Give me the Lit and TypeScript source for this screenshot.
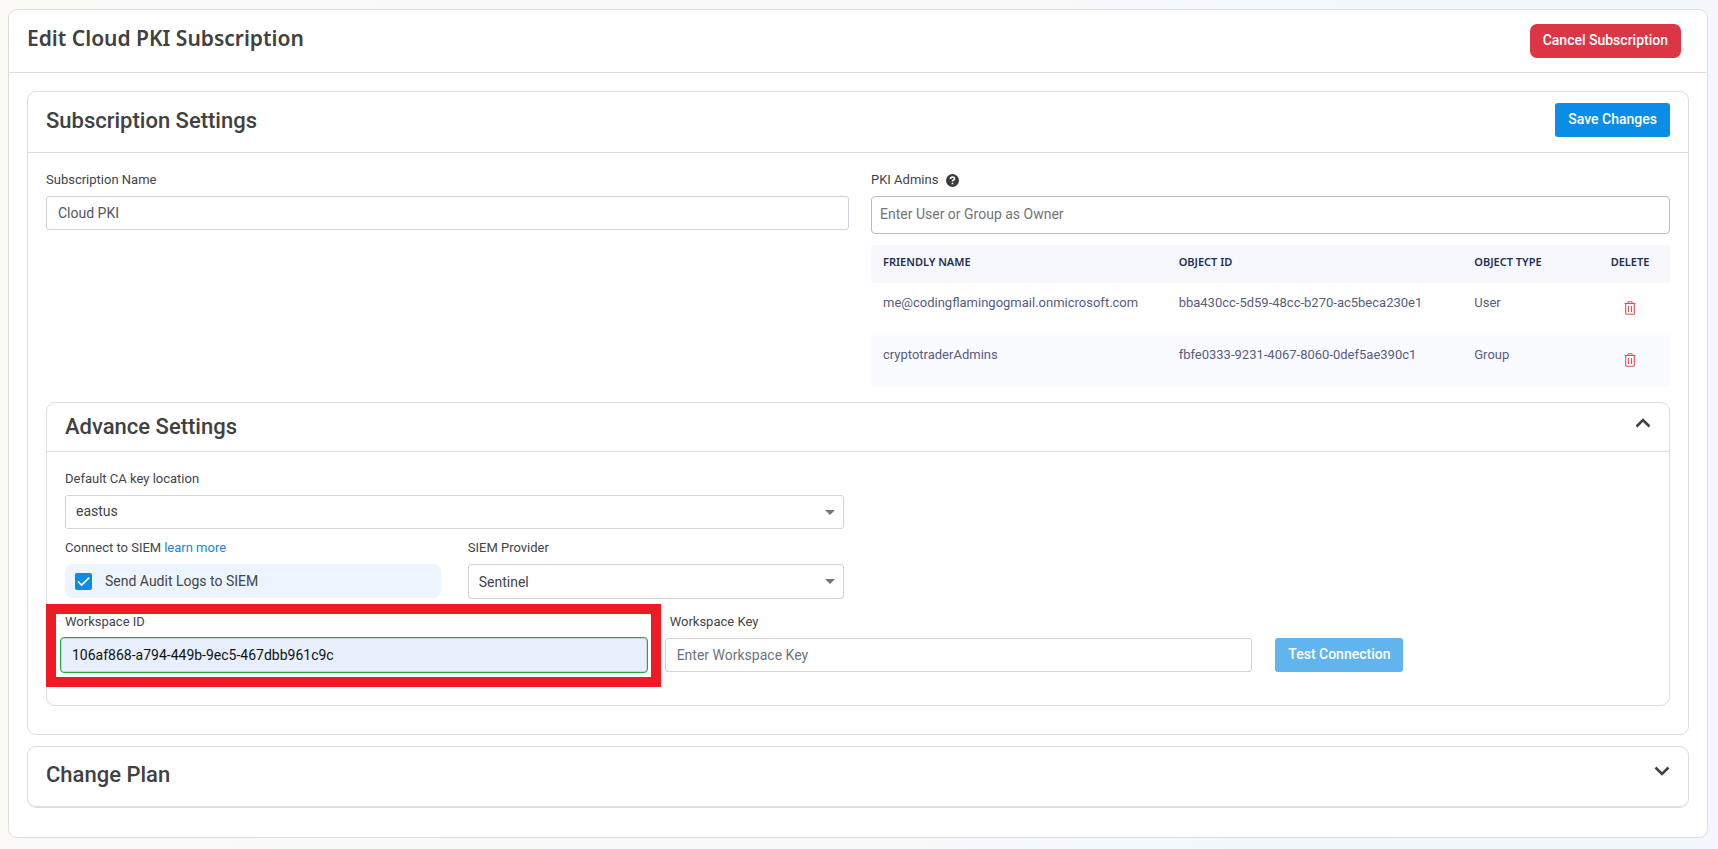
import { LitElement, html, css } from "lit";
import { customElement, state } from "lit/decorators.js";

interface Admin {
  name: string;
  id: string;
  type: string;
}

const trash = html`<svg width="12" height="14" viewBox="0 0 12 14" fill="none" stroke="#e64c55" aria-hidden="true">
  <path d="M0.5 2.5h11M3.5 2.2l0.8-1.4h3.4l0.8 1.4M1.7 2.8v9.4q0 1 1 1h6.6q1 0 1-1V2.8M4.5 5v6M7.5 5v6" stroke-width="1.1" />
</svg>`;

const chevron = (up: boolean) => html`<svg width="16" height="10" viewBox="0 0 16 10" fill="none" stroke="#3e4044" stroke-width="2.6" aria-hidden="true">
  <path d=${up ? "M1.5 8.5L8 2l6.5 6.5" : "M1.5 1.5L8 8l6.5-6.5"} />
</svg>`;

@customElement("app-root")
export class AppRoot extends LitElement {
  @state() private admins: Admin[] = [
    { name: "me@codingflamingogmail.onmicrosoft.com", id: "bba430cc-5d59-48cc-b270-ac5beca230e1", type: "User" },
    { name: "cryptotraderAdmins", id: "fbfe0333-9231-4067-8060-0def5ae390c1", type: "Group" },
  ];

  static styles = css`
    :host {
      display: block;
      min-height: 100vh;
      box-sizing: border-box;
      padding: 9px 10px 11px 8px;
      background: linear-gradient(100deg, #fbfaf7 0%, #f9f9f9 40%, #f4f8fd 75%, #f4f8fe 100%);
      font-family: Roboto, "Liberation Sans", sans-serif;
      font-size: 14px;
      line-height: 20px;
      color: #434349;
    }
    * { box-sizing: border-box; }
    h1, h2 { margin: 0; color: #414141; font-weight: 500; font-size: 22px; line-height: 28px; }
    h1 { font-family: "Noto Sans", sans-serif; font-size: 21px; font-weight: 600; }
    .card { border: 1px solid #dedede; border-radius: 9px; background: #fff; }
    .head { display: flex; justify-content: space-between; align-items: flex-start; border-bottom: 1px solid #dedede; }
    .page-head { padding: 14px 26px 14px 18px; }
    .page-body { display: grid; gap: 11px; padding: 18px 18px 29px; }
    .settings-head { padding: 11px 18px 15px; }
    .settings-head h2 { padding-top: 4px; }
    .settings-body { padding: 17px 18px 28px; }
    .advance-head { padding: 10px 18px; }
    .advance-body { padding: 17px 18px 33px 13px; }
    .plan-head { padding: 14px 18px 17px; border-radius: 0 0 9px 9px; }
    .btn {
      height: 34px; padding: 0 13px 2px; border: 0; border-radius: 3px;
      background: #0b8ce6; color: #fff; font: 500 14px/20px Roboto, sans-serif; white-space: nowrap;
    }
    .btn-danger { border-radius: 7px; background: #dc3545; }
    .btn:disabled { background: #61b4ee; }
    .toggle { border: 0; background: none; padding: 5px 0 0; line-height: 0; }
    .people { display: grid; grid-template-columns: 803fr 799fr; gap: 22px; }
    .label { display: flex; align-items: center; gap: 8px; font-size: 13px; line-height: 20px; margin-bottom: 6px; }
    .input {
      display: block; width: 100%; height: 34px; padding: 0 11px;
      border: 1px solid #ced4da; border-radius: 3px; background: #fff;
      color: #54565c; font: 400 14px/20px Roboto, sans-serif; outline: 0;
    }
    .input::placeholder { color: #6c757d; opacity: 1; }
    .owner { height: 38px; padding: 0 8px 2px; border-color: #bbb; border-radius: 4px; }
    .owner::placeholder { color: #757575; }
    .select { appearance: none; color: #434349; padding: 0 24px 2px 10px; }
    .tall { height: 35px; padding-bottom: 0; }
    .select-box { display: grid; align-items: center; }
    .select-box > * { grid-area: 1 / 1; }
    .arrow { justify-self: end; margin-right: 9px; pointer-events: none; border: 5px solid transparent; border-top-color: #757575; border-bottom: 0; }
    table { width: 100%; margin-top: 11px; border-collapse: collapse; table-layout: fixed; color: #575c7d; font-size: 13px; }
    .col-wide { width: 37%; }
    .col-type { width: 16%; }
    th, td { text-align: left; vertical-align: top; padding: 10px 12px; line-height: 20px; font-weight: 400; }
    th { height: 38px; padding-top: 7px; padding-bottom: 7px; background: #f6f8fd; color: #1f2f50; font-size: 11px; font-weight: 600; font-family: "Noto Sans", sans-serif; text-transform: uppercase; }
    td { height: 52px; }
    tr:nth-child(even) td { background: #fafbff; }
    .center { text-align: center; }
    .icon-btn { border: 0; padding: 8px 0 0; background: none; line-height: 0; }
    .advance { margin-top: 15px; }
    .general { width: calc(50% - 12px); padding-left: 5px; }
    .siem { display: grid; grid-template-columns: 1fr 1fr; gap: 27px; margin-top: 9px; }
    a { color: #1787e0; text-decoration: none; margin-left: -5px; }
    .check { display: flex; align-items: center; gap: 13px; height: 34px; padding: 0 10px; border-radius: 8px; background: #ecf5fd; font-size: 14px; }
    .tick-box { display: grid; }
    .tick-box input { appearance: none; margin: 0; width: 17px; height: 17px; border-radius: 2px; background: #0b8ce6; grid-area: 1 / 1; }
    .tick { width: 17px; height: 17px; grid-area: 1 / 1; pointer-events: none; }
    .workspace { display: grid; grid-template-columns: calc(37% - 1px) calc(37% - 1px) auto 1fr; gap: 17px; align-items: end; margin-top: 13px; }
    .workspace .label { padding-left: 5px; }
    .workspace .btn { margin-left: 6px; }
    .marked { position: relative; }
    .marked::after { content: ""; position: absolute; inset: -8px -13px -15px -14px; border: 10px solid #ed1c24; pointer-events: none; }
    .valid { background: #e8effd; border-color: #28a745; color: #111; box-shadow: inset 0 0 0 1px #ced4da; height: 36px; margin: -1px 0; border-radius: 4px; }
  `;

  private remove(admin: Admin) {
    this.admins = this.admins.filter((a) => a !== admin);
  }

  render() {
    return html`
      <main class="card">
        <header class="head page-head">
          <h1>Edit Cloud PKI Subscription</h1>
          <button class="btn btn-danger">Cancel Subscription</button>
        </header>
        <div class="page-body">
          <section class="card">
            <div class="head settings-head">
              <h2>Subscription Settings</h2>
              <button class="btn">Save Changes</button>
            </div>
            <div class="settings-body">
              <div class="people">
                <div>
                  <label class="label" for="name">Subscription Name</label>
                  <input class="input" id="name" value="Cloud PKI" />
                </div>
                <div>
                  <label class="label" for="owner">PKI Admins
                    <svg width="13" height="13" viewBox="0 0 13 13" aria-hidden="true">
                      <circle cx="6.5" cy="6.5" r="6.5" fill="#3b3b3b" />
                      <path d="M4.5 5q0-2 2-2t2 1.7q0 1-1 1.4t-1 1.3M6.5 8.7v1.6" fill="none" stroke="#fff" stroke-width="1.6" />
                    </svg>
                  </label>
                  <input class="input owner" id="owner" placeholder="Enter User or Group as Owner" />
                  <table>
                    <colgroup><col class="col-wide" /><col class="col-wide" /><col class="col-type" /><col /></colgroup>
                    <thead>
                      <tr><th>Friendly Name</th><th>Object ID</th><th>Object Type</th><th class="center">Delete</th></tr>
                    </thead>
                    <tbody>
                      ${this.admins.map((a) => html`<tr>
                        <td>${a.name}</td><td>${a.id}</td><td>${a.type}</td>
                        <td class="center"><button class="icon-btn" aria-label="Delete" @click=${() => this.remove(a)}>${trash}</button></td>
                      </tr>`)}
                    </tbody>
                  </table>
                </div>
              </div>
              <section class="card advance">
                <div class="head advance-head">
                  <h2>Advance Settings</h2>
                  <button class="toggle" aria-label="Collapse">${chevron(true)}</button>
                </div>
                <div class="advance-body">
                  <div class="general">
                    <label class="label" for="location">Default CA key location</label>
                    <div class="select-box">
                      <select class="input select" id="location"><option>eastus</option></select>
                      <span class="arrow"></span>
                    </div>
                    <div class="siem">
                      <div>
                        <div class="label">Connect to SIEM <a href="#siem">learn more</a></div>
                        <label class="check">
                          <span class="tick-box">
                            <input type="checkbox" checked />
                            <svg class="tick" viewBox="0 0 17 17" fill="none" stroke="#fff" stroke-width="1.7" aria-hidden="true"><path d="M3 8.5l3.6 3.6L14.2 4.6" /></svg>
                          </span>
                          Send Audit Logs to SIEM
                        </label>
                      </div>
                      <div>
                        <label class="label" for="provider">SIEM Provider</label>
                        <div class="select-box">
                          <select class="input select tall" id="provider"><option>Sentinel</option></select>
                          <span class="arrow"></span>
                        </div>
                      </div>
                    </div>
                  </div>
                  <div class="workspace">
                    <div class="marked">
                      <label class="label" for="wid">Workspace ID</label>
                      <input class="input valid" id="wid" value="106af868-a794-449b-9ec5-467dbb961c9c" />
                    </div>
                    <div>
                      <label class="label" for="wkey">Workspace Key</label>
                      <input class="input" id="wkey" placeholder="Enter Workspace Key" />
                    </div>
                    <button class="btn" disabled>Test Connection</button>
                  </div>
                </div>
              </section>
            </div>
          </section>
          <section class="card">
            <div class="head plan-head">
              <h2>Change Plan</h2>
              <button class="toggle" aria-label="Expand">${chevron(false)}</button>
            </div>
          </section>
        </div>
      </main>
    `;
  }
}
